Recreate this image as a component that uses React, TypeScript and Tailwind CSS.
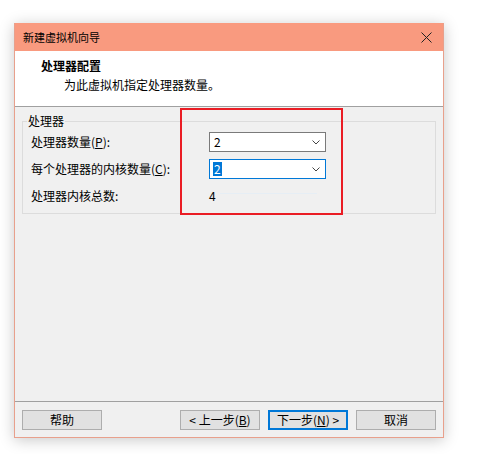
import React from 'react';

const FONT = '"Noto Sans CJK SC", "Noto Sans", "Liberation Sans", sans-serif';

const Combo = ({ value, focused }: { value: string; focused?: boolean }) => (
  <div
    className={`flex h-[20px] w-[117px] items-center justify-between bg-white pl-[3px] pr-[5px] border ${
      focused ? 'border-[#0078d7]' : 'border-[#7a7a7a]'
    }`}
  >
    <span
      className={`text-[12px] leading-[14px] px-[1px] ${focused ? 'bg-[#0078d7] text-white' : 'text-black'}`}
    >
      {value}
    </span>
    <svg width="8" height="5" viewBox="0 0 8 5">
      <path d="M0.5 0.5 L4 4 L7.5 0.5" fill="none" stroke="#444" strokeWidth="1" />
    </svg>
  </div>
);

const Btn = ({ children, primary }: { children: React.ReactNode; primary?: boolean }) => (
  <button
    className={`h-[20px] w-[80px] bg-[#e1e1e1] text-[12px] leading-none text-black ${
      primary ? 'border-2 border-[#0078d7]' : 'border border-[#adadad]'
    }`}
  >
    {children}
  </button>
);

export default function App() {
  return (
    <div className="h-[454px] w-[485px] bg-white pl-[14px] pt-[23px]" style={{ fontFamily: FONT }}>
      <div className="flex h-[415px] w-[430px] flex-col border-x border-b border-[#e8a08c] bg-[#f0f0f0] shadow-[0_2px_14px_rgba(0,0,0,0.22)]">
        {/* Title bar */}
        <div className="flex h-[28px] items-center justify-between bg-[#f99a7f] pl-[8px] pr-[11px]">
          <span className="text-[11px] text-black">新建虚拟机向导</span>
          <svg width="11" height="11" viewBox="0 0 11 11">
            <path d="M0.5 0.5 L10.5 10.5 M10.5 0.5 L0.5 10.5" stroke="#222" strokeWidth="1" />
          </svg>
        </div>

        {/* Header */}
        <div className="flex h-[56px] flex-col border-b border-[#a0a0a0] bg-white pl-[26px] pt-[7px]">
          <span className="text-[12px] font-bold leading-[16px] text-black">处理器配置</span>
          <span className="mt-[3px] pl-[23px] text-[12px] leading-[16px] text-black">为此虚拟机指定处理器数量。</span>
        </div>

        {/* Body */}
        <div className="relative flex-1 px-[7px] pt-[14px]">
          <div className="relative border border-[#dcdcdc] pb-[7px] pl-[8px] pt-[10px]">
            <span className="absolute -top-[9px] left-[4px] bg-[#f0f0f0] px-[1px] text-[12px] leading-[16px] text-black">
              处理器
            </span>
            <div className="flex flex-col gap-[7px]">
              <div className="flex h-[20px] items-center">
                <span className="w-[178px] text-[12px] text-black">
                  处理器数量(<u>P</u>):
                </span>
                <Combo value="2" />
              </div>
              <div className="flex h-[20px] items-center">
                <span className="w-[178px] text-[12px] text-black">
                  每个处理器的内核数量(<u>C</u>):
                </span>
                <Combo value="2" focused />
              </div>
              <div className="flex h-[20px] items-center">
                <span className="w-[178px] text-[12px] text-black">处理器内核总数:</span>
                <div className="flex items-center gap-[4px]">
                  <span className="text-[12px] text-black">4</span>
                  <div className="mt-[-6px] h-[1px] w-[97px] bg-[#e6eef5]" />
                </div>
              </div>
            </div>
          </div>

          {/* red annotation */}
          <div className="absolute left-[165px] top-[1px] h-[107px] w-[163px] border-2 border-[#ea1c24]" />
        </div>

        {/* Footer */}
        <div className="flex h-[36px] items-start justify-between border-t border-[#a0a0a0] px-[7px] pt-[8px]">
          <Btn>帮助</Btn>
          <div className="flex gap-[8px]">
            <Btn>
              &lt; 上一步(<u>B</u>)
            </Btn>
            <Btn primary>
              下一步(<u>N</u>) &gt;
            </Btn>
            <Btn>取消</Btn>
          </div>
        </div>
      </div>
    </div>
  );
}
